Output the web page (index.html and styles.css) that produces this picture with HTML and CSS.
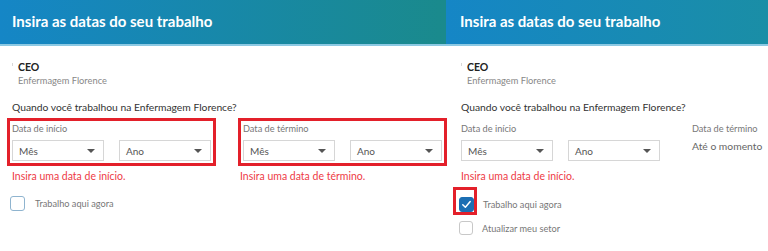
FILE: index.html
```html
<!DOCTYPE html>
<html lang="pt">
<head>
<meta charset="utf-8">
<title>Datas do trabalho</title>
<link rel="stylesheet" href="styles.css">
</head>
<body>
<div class="page">
  <section class="panel panel-left">
    <header class="panel-head"><h2 class="panel-title">Insira as datas do seu trabalho</h2></header>
    <div class="panel-body">
      <div class="job">
        <span class="job-logo"></span>
        <div class="job-text">
          <div class="job-title">CEO</div>
          <div class="job-company">Enfermagem Florence</div>
        </div>
      </div>
      <p class="question">Quando você trabalhou na Enfermagem Florence?</p>
      <div class="dates">
        <div class="date-col">
          <div class="group marked">
            <div class="group-label">Data de início</div>
            <div class="selects">
              <div class="select"><span>Mês</span><i class="caret"></i></div>
              <div class="select"><span>Ano</span><i class="caret"></i></div>
            </div>
          </div>
          <div class="error">Insira uma data de início.</div>
        </div>
        <div class="date-col">
          <div class="group marked">
            <div class="group-label">Data de término</div>
            <div class="selects">
              <div class="select"><span>Mês</span><i class="caret"></i></div>
              <div class="select"><span>Ano</span><i class="caret"></i></div>
            </div>
          </div>
          <div class="error error-shift">Insira uma data de término.</div>
        </div>
      </div>
      <label class="check-row">
        <span class="box box-focus"></span>
        <span class="check-label">Trabalho aqui agora</span>
      </label>
    </div>
  </section>
  <section class="panel panel-right">
    <header class="panel-head"><h2 class="panel-title">Insira as datas do seu trabalho</h2></header>
    <div class="panel-body">
      <div class="job">
        <span class="job-logo"></span>
        <div class="job-text">
          <div class="job-title">CEO</div>
          <div class="job-company">Enfermagem Florence</div>
        </div>
      </div>
      <p class="question">Quando você trabalhou na Enfermagem Florence?</p>
      <div class="dates">
        <div class="date-col">
          <div class="group">
            <div class="group-label">Data de início</div>
            <div class="selects">
              <div class="select"><span>Mês</span><i class="caret"></i></div>
              <div class="select"><span>Ano</span><i class="caret"></i></div>
            </div>
          </div>
          <div class="error">Insira uma data de início.</div>
        </div>
        <div class="date-col date-col-auto">
          <div class="group">
            <div class="group-label">Data de término</div>
            <div class="present">Até o momento</div>
          </div>
        </div>
      </div>
      <label class="check-row check-row-first">
        <span class="box box-checked marked-box">
          <svg viewBox="0 0 14 14" width="13" height="13"><path d="M3 7.2 L5.8 10 L11 3.8" fill="none" stroke="#fff" stroke-width="1.6" stroke-linecap="round" stroke-linejoin="round"/></svg>
        </span>
        <span class="check-label">Trabalho aqui agora</span>
      </label>
      <label class="check-row check-row-2">
        <span class="box"></span>
        <span class="check-label">Atualizar meu setor</span>
      </label>
    </div>
  </section>
</div>
</body>
</html>
```

FILE: styles.css
```css
* { box-sizing: border-box; }
html, body { margin: 0; padding: 0; background: #fff; }
body {
  font-family: Lato, "Liberation Sans", sans-serif;
  width: 768px;
  height: 251px;
  overflow: hidden;
}
.page { display: flex; }
.panel { flex: none; }
.panel-left { width: 446px; }
.panel-right { width: 322px; }

.panel-head {
  height: 46px;
  border-bottom: 2px solid #8cc9e3;
  display: flex;
  align-items: flex-start;
}
.panel-left .panel-head { background: linear-gradient(90deg, #1586c6 0%, #1a8a8c 100%); padding-left: 12px; }
.panel-right .panel-head { background: linear-gradient(90deg, #1586c6 0%, #1a8ea6 100%); padding-left: 14px; }
.panel-title {
  margin: 0;
  padding-top: 12px;
  color: #fff;
  font-size: 15px;
  font-weight: 700;
  line-height: 18px;
}

.panel-body { padding-top: 15px; }
.panel-left .panel-body { padding-left: 12px; }
.panel-right .panel-body { padding-left: 15px; }

.job { display: flex; }
.job-logo {
  width: 1px; height: 3px; margin-top: 2px;
  background: #d8d8d8;
}
.job-text { margin-left: 5px; }
.job-title { font-size: 10.5px; font-weight: 700; color: #222; line-height: 13px; }
.job-company { font-size: 9.3px; color: #888; line-height: 13px; }

.question {
  margin: 14px 0 0;
  font-size: 10.3px;
  color: #333;
  line-height: 13px;
}

.dates { display: flex; gap: 32px; margin-top: 9px; }
.date-col { width: 199px; flex: none; }
.date-col-auto { width: auto; white-space: nowrap; }
.group { position: relative; }
.group.marked { outline: 3px solid #e3202a; outline-offset: 2px; }
.group-label { font-size: 9.2px; color: #777; line-height: 11px; }
.selects { display: flex; gap: 15px; margin-top: 6px; }
.select {
  width: 92px;
  height: 21px;
  border: 1px solid #d6d6d6;
  background: #fff;
  display: flex;
  align-items: center;
  justify-content: space-between;
  padding: 0 8px 0 6px;
  font-size: 10px;
  color: #555;
}
.caret {
  width: 0; height: 0;
  border-left: 4px solid transparent;
  border-right: 4px solid transparent;
  border-top: 4px solid #555;
}
.present { font-size: 10.3px; color: #666; margin-top: 6px; line-height: 13px; }

.error { font-size: 10.5px; color: #ee3b46; margin-top: 9px; line-height: 12px; }
.error-shift { margin-left: -3px; }

.check-row { display: flex; align-items: center; margin-top: 14px; margin-left: -2px; height: 15px; }
.check-row-first { margin-top: 15px; }
.check-row-2 { margin-top: 9px; height: 14px; }
.box {
  width: 15px; height: 15px;
  border: 1.5px solid #c8c8c8;
  border-radius: 3px;
  background: #fff;
  flex: none;
  display: flex;
  align-items: center;
  justify-content: center;
  position: relative;
}
.check-row-2 .box { width: 14px; height: 14px; border-width: 1px; }
.box-focus { border-color: #8fb4cf; }
.box-checked { background: #1c6eb3; border-color: #1c6eb3; }
.marked-box::after {
  content: "";
  position: absolute;
  top: -11px; bottom: -4px; left: -7px; right: -4px;
  border: 3px solid #e3202a;
}
.check-label { font-size: 9.2px; color: #777; margin-left: 10px; }
.panel-right .check-label { margin-left: 9px; }
```
